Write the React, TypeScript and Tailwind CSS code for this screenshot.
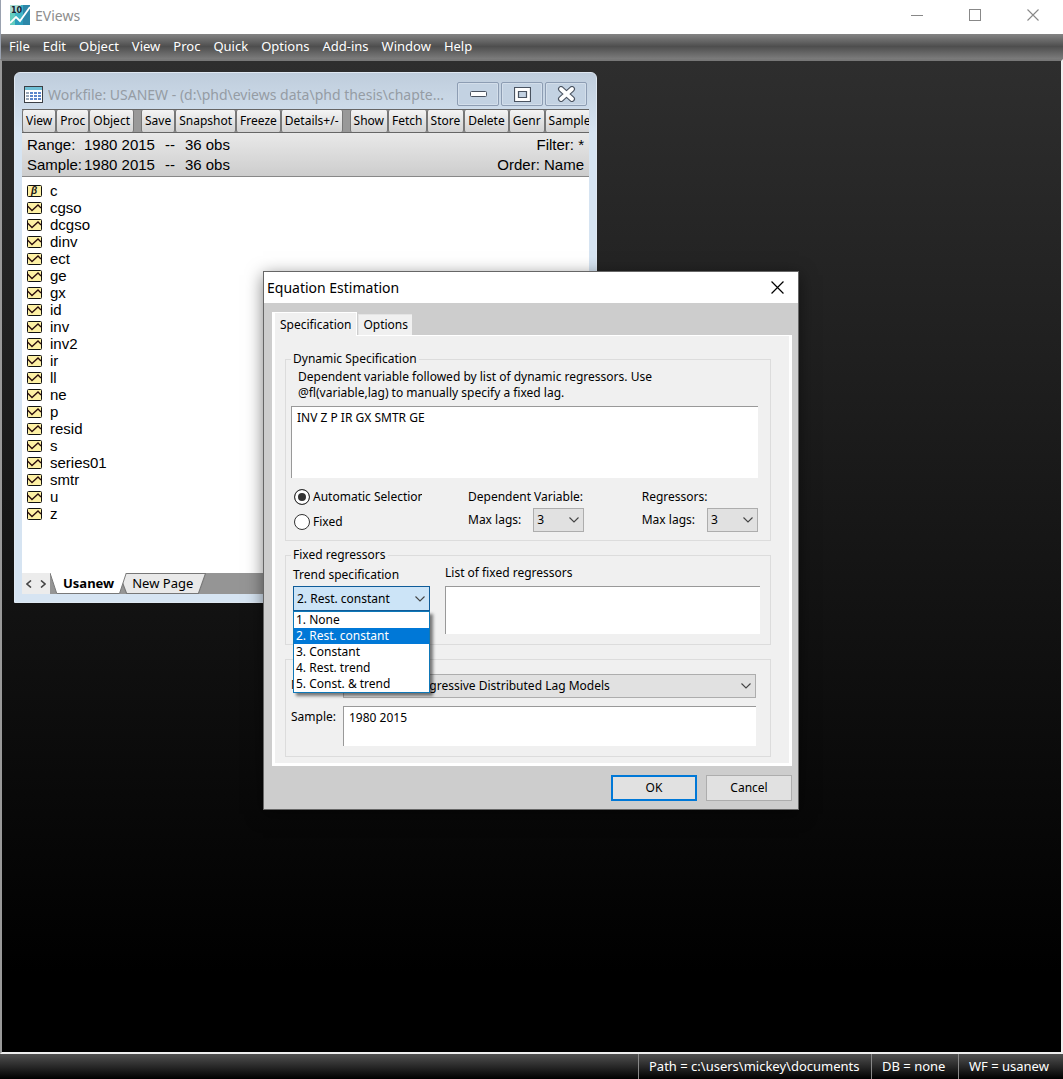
import { useState } from "react";
import type { ReactNode } from "react";
import { clsx } from "clsx";

const menus = ["File", "Edit", "Object", "View", "Proc", "Quick", "Options", "Add-ins", "Window", "Help"];

const toolGroups = [
  ["View", "Proc", "Object"],
  ["Save", "Snapshot", "Freeze", "Details+/-"],
  ["Show", "Fetch", "Store", "Delete", "Genr", "Sample"],
];

const series = [
  "c", "cgso", "dcgso", "dinv", "ect", "ge", "gx", "id", "inv", "inv2",
  "ir", "ll", "ne", "p", "resid", "s", "series01", "smtr", "u", "z",
];

const trends = ["1. None", "2. Rest. constant", "3. Constant", "4. Rest. trend", "5. Const. & trend"];

function AppIcon() {
  return (
    <svg width="20" height="20" viewBox="0 0 20 20" aria-hidden="true">
      <rect width="20" height="20" fill="#3fb3c4" />
      <rect width="11" height="8" fill="#a9dcd3" />
      <path d="M0 8h5v12H0z" fill="#63cdbf" />
      <path d="M13 0h7v20h-7z" fill="#2c87a8" />
      <path d="M5 12l4 4 4-5v9H5z" fill="#2c9dbb" />
      <path d="M0 18l6-6 4 4L20 2" fill="none" stroke="#fff" strokeWidth="1.8" />
      <text x="1" y="8" fontSize="8" fontWeight="bold" fontFamily="DejaVu Sans, sans-serif" fill="#123">10</text>
    </svg>
  );
}

function TableIcon() {
  return (
    <svg width="19" height="17" viewBox="0 0 19 17" aria-hidden="true" shapeRendering="crispEdges">
      <rect x="0" y="0" width="19" height="17" fill="#3b3f45" />
      <rect x="1" y="1" width="17" height="15" fill="#fff" />
      <rect x="1" y="1" width="17" height="3" fill="#6fc0d6" />
      {[6, 9, 12].map((y) =>
        [2, 6, 10, 14].map((x) => <rect key={`${x}-${y}`} x={x} y={y} width="3" height="2" fill={x === 2 ? "#9aa7b8" : "#5b86cc"} />)
      )}
    </svg>
  );
}

function SeriesIcon({ coef }: { coef?: boolean }) {
  return (
    <svg width="15" height="12" viewBox="0 0 15 12" aria-hidden="true">
      <rect x="0.5" y="0.5" width="14" height="11" rx="1" fill="#fdf0a4" stroke="#111" />
      {coef ? (
        <text x="4" y="9" fontSize="10" fontWeight="bold" fontStyle="italic" fontFamily="Liberation Sans, sans-serif" fill="#111">β</text>
      ) : (
        <path d="M0.5 4L5 8.5L11 3L14 6" fill="none" stroke="#2a0c0c" strokeWidth="1.3" />
      )}
    </svg>
  );
}

function Chevron({ className }: { className?: string }) {
  return (
    <svg className={clsx("pointer-events-none", className)} width="10" height="6" viewBox="0 0 10 6" aria-hidden="true">
      <path d="M0.5 0.5L5 5L9.5 0.5" fill="none" stroke="#444" strokeWidth="1.1" />
    </svg>
  );
}

function Cross({ size, color }: { size: number; color: string }) {
  return (
    <svg width={size} height={size} viewBox="0 0 12 12" aria-hidden="true">
      <path d="M0.5 0.5l11 11M11.5 0.5l-11 11" stroke={color} strokeWidth="1.1" />
    </svg>
  );
}

function MenuBar() {
  return (
    <nav className="flex h-[25px] items-center gap-[13px] border-l border-gray-400 bg-linear-to-b/srgb from-[#848484] via-[#4e4e4e] to-[#7c7c7c] pl-2 text-[13px] text-white">
      {menus.map((m) => (
        <button key={m}>{m}</button>
      ))}
    </nav>
  );
}

function WindowButton({ label, children }: { label: string; children: ReactNode }) {
  return (
    <button aria-label={label} className="flex h-6 w-[42px] items-center justify-center rounded-xs border border-[#8d9db3] bg-[#c3d2e2] shadow-[inset_0_0_0_1px_#d3deea]">
      {children}
    </button>
  );
}

function PageTab({ label, active }: { label: string; active?: boolean }) {
  return (
    <button className={clsx("relative h-full px-[13px] text-[13px]", active ? "z-10 font-bold" : "-ml-2")}>
      <svg className="absolute inset-0 h-full w-full" viewBox="0 0 80 21" preserveAspectRatio="none" aria-hidden="true">
        <path
          d={active ? "M0 0L7 20.5H72L79 0" : "M0 0.5H79.5L73 20.5H7Z"}
          fill={active ? "#fff" : "#e9e9e9"}
          stroke="#777"
        />
      </svg>
      <span className="relative">{label}</span>
    </button>
  );
}

function WorkfileSpan() {
  return (
    <dd className="flex gap-[10px]">
      <span>1980 2015</span>
      <span>--</span>
      <span>36 obs</span>
    </dd>
  );
}

function Workfile() {
  return (
    <section className="absolute top-[11px] left-3 w-[583px] rounded-t-md border border-[#dfe8f2] bg-linear-to-b/srgb from-[#bfcddc] to-[#d6e4f2] to-[60px] px-[7px] pb-2">
      <header className="flex h-9 items-center pt-[6px] pl-[2px]">
        <TableIcon />
        <h2 className="ml-[5px] flex-1 truncate text-[14px] text-[#959ca4]">
          Workfile: USANEW - (d:\phd\eviews data\phd thesis\chapte...
        </h2>
        <div className="flex gap-[2px] pr-[2px]">
          <WindowButton label="Minimize">
            <svg width="17" height="6" viewBox="0 0 17 6">
              <rect x="0.5" y="0.5" width="16" height="5" rx="1" fill="#fff" stroke="#4a5360" />
            </svg>
          </WindowButton>
          <WindowButton label="Maximize">
            <svg width="17" height="15" viewBox="0 0 17 15">
              <path d="M0.5 0.5h16v14h-16z M4.5 4.5v6h8v-6z" fill="#fff" fillRule="evenodd" stroke="#4a5360" strokeWidth="1.2" />
            </svg>
          </WindowButton>
          <WindowButton label="Close">
            <svg width="19" height="16" viewBox="0 0 19 16">
              <path d="M4 3l11 10M15 3L4 13" stroke="#4a5360" strokeWidth="6" strokeLinecap="round" />
              <path d="M4 3l11 10M15 3L4 13" stroke="#fff" strokeWidth="3.8" strokeLinecap="round" />
            </svg>
          </WindowButton>
        </div>
      </header>

      <div className="flex h-6 overflow-hidden border-y border-[#666] bg-[#999] text-[12px]">
        {toolGroups.map((group, i) => (
          <div key={i} className={clsx("flex shrink-0", i > 0 && "ml-[7px]")}>
            {group.map((t) => (
              <button key={t} className="rounded-xs border-x border-[#777] bg-linear-to-b/srgb from-[#f4f4f4] to-[#d2d2d2] px-[3px]">
                {t}
              </button>
            ))}
          </div>
        ))}
      </div>

      <div className="flex justify-between border-b border-[#888] bg-linear-to-b/srgb from-[#e9e9e9] to-[#cdcdcd] px-[5px] pt-[2px] pb-px font-['Liberation_Sans',sans-serif] text-[15px] leading-5">
        <dl className="grid grid-cols-[57px_1fr]">
          <dt>Range:</dt>
          <WorkfileSpan />
          <dt>Sample:</dt>
          <WorkfileSpan />
        </dl>
        <div className="text-right">
          <p>Filter: *</p>
          <p>Order: Name</p>
        </div>
      </div>

      <ul className="bg-white px-[5px] pt-[5px] pb-[51px] font-['Liberation_Sans',sans-serif] text-[15px]">
        {series.map((s) => (
          <li key={s} className="flex h-[17px] items-center gap-2 leading-[17px]">
            <SeriesIcon coef={s === "c"} />
            <span>{s}</span>
          </li>
        ))}
      </ul>

      <div className="flex h-[21px] bg-[#959595]">
        <div className="flex w-7 items-center justify-around bg-[#ececec]">
          <button aria-label="Previous page">
            <svg width="6" height="8" viewBox="0 0 6 8"><path d="M5 0.5L1 4l4 3.5" fill="none" stroke="#444" strokeWidth="1.6" /></svg>
          </button>
          <button aria-label="Next page">
            <svg width="6" height="8" viewBox="0 0 6 8"><path d="M1 0.5L5 4L1 7.5" fill="none" stroke="#444" strokeWidth="1.6" /></svg>
          </button>
        </div>
        <PageTab label="Usanew" active />
        <PageTab label="New Page" />
      </div>
    </section>
  );
}

function LagPicker({ id, title }: { id: string; title: string }) {
  return (
    <div className="flex flex-col gap-[3px]">
      <p>{title}</p>
      <div className="flex items-center gap-3">
        <label htmlFor={id}>Max lags:</label>
        <div className="relative">
          <select id={id} defaultValue="3" className="h-6 w-[51px] appearance-none border border-[#adadad] bg-[#e1e1e1] pl-[3px]">
            {["1", "2", "3", "4"].map((n) => (
              <option key={n}>{n}</option>
            ))}
          </select>
          <Chevron className="absolute top-[9px] right-[5px]" />
        </div>
      </div>
    </div>
  );
}

const radioClass =
  "size-4 appearance-none rounded-full border border-[#333] bg-white checked:bg-[#333] checked:shadow-[inset_0_0_0_3px_#fff]";
const groupClass = "min-w-0 border border-[#dcdcdc]";
const boxClass = "block w-full resize-none border-t border-l border-[#999] bg-white px-[5px] py-[3px] leading-4 outline-none";

function EquationDialog() {
  const [trend, setTrend] = useState(trends[1]);

  return (
    <section
      role="dialog"
      aria-label="Equation Estimation"
      className="absolute top-[210px] left-[261px] w-[536px] border border-[#666] bg-[#cdcdcd] text-[12px] leading-4 shadow-[0_4px_16px_rgba(0,0,0,0.5)]"
    >
      <header className="flex h-[31px] items-center justify-between bg-white pr-[14px] pl-[3px]">
        <h2 className="text-[14px]">Equation Estimation</h2>
        <button aria-label="Close">
          <Cross size={13} color="#000" />
        </button>
      </header>

      <div className="pt-[9px] pr-[6px] pb-2 pl-2">
        <div role="tablist" className="flex items-end gap-px">
          <button role="tab" aria-selected="true" className="relative z-10 -mb-px h-6 border-t border-r border-l-3 border-white bg-[#f0f0f0] px-[5px]">
            Specification
          </button>
          <button role="tab" aria-selected="false" className="h-[21px] border-t border-l border-[#e4e4e4] bg-[#f0f0f0] px-1">
            Options
          </button>
        </div>

        <form className="border-t border-r-3 border-b-3 border-l-3 border-white bg-[#f0f0f0] px-[10px] pt-[15px] pb-[6px]" onSubmit={(e) => e.preventDefault()}>
          <div className="mr-2 flex flex-col gap-[6px]">
            <fieldset className={clsx(groupClass, "pr-3 pb-2 pl-[5px]")}>
              <legend className="px-[2px]">Dynamic Specification</legend>
              <label htmlFor="equation" className="ml-[7px] block w-[380px] pt-[2px]">
                Dependent variable followed by list of dynamic regressors. Use @fl(variable,lag) to manually specify a fixed lag.
              </label>
              <textarea id="equation" defaultValue="INV Z P IR GX SMTR GE" className={clsx(boxClass, "mt-[5px] h-[72px]")} />
              <div className="mt-[11px] flex">
                <div className="mr-[46px] flex w-[131px] flex-col gap-[9px] pl-[3px]">
                  <label className="flex items-center gap-[3px] overflow-hidden whitespace-nowrap">
                    <input type="radio" name="lags" defaultChecked className={clsx(radioClass, "shrink-0")} />
                    Automatic Selection
                  </label>
                  <label className="flex items-center gap-[3px]">
                    <input type="radio" name="lags" className={radioClass} />
                    Fixed
                  </label>
                </div>
                <LagPicker id="dep-lags" title="Dependent Variable:" />
                <div className="ml-auto">
                  <LagPicker id="reg-lags" title="Regressors:" />
                </div>
              </div>
            </fieldset>

            <fieldset className={clsx(groupClass, "flex gap-[15px] pr-[10px] pb-[10px] pl-[7px]")}>
              <legend className="-ml-[2px] px-[2px]">Fixed regressors</legend>
              <div className="relative w-[137px] shrink-0 pt-1">
                <label htmlFor="trend">Trend specification</label>
                <select
                  id="trend"
                  value={trend}
                  onChange={(e) => setTrend(e.target.value)}
                  className="mt-[3px] block h-[25px] w-full appearance-none border border-[#0f5c99] bg-[#cce4f7] pl-[3px]"
                >
                  {trends.map((t) => (
                    <option key={t}>{t}</option>
                  ))}
                </select>
                <Chevron className="absolute top-[33px] right-[5px]" />
                <ul role="listbox" aria-label="Trend specification" className="absolute top-12 left-0 z-20 w-full border border-[#0f78b8] bg-white shadow-[3px_3px_3px_rgba(0,0,0,0.5)]">
                  {trends.map((t) => (
                    <li
                      key={t}
                      role="option"
                      aria-selected={t === trend}
                      onClick={() => setTrend(t)}
                      className={clsx("pl-[2px]", t === trend && "bg-[#0078d7] text-white")}
                    >
                      {t}
                    </li>
                  ))}
                </ul>
              </div>
              <div className="flex-1 pt-[2px]">
                <label htmlFor="fixed-list">List of fixed regressors</label>
                <textarea id="fixed-list" className={clsx(boxClass, "mt-[5px] h-12")} />
              </div>
            </fieldset>

            <fieldset className={clsx(groupClass, "mt-2 grid grid-cols-[52px_1fr] gap-y-2 pt-[14px] pr-[14px] pb-[10px] pl-[5px]")}>
              <label htmlFor="method" className="pt-[3px]">Method:</label>
              <div className="relative">
                <select id="method" className="h-6 w-full appearance-none border border-[#adadad] bg-[#e1e1e1] pl-[3px]">
                  <option>ARDL - Auto-regressive Distributed Lag Models</option>
                </select>
                <Chevron className="absolute top-[9px] right-[5px]" />
              </div>
              <label htmlFor="sample" className="pt-[3px]">Sample:</label>
              <textarea id="sample" defaultValue="1980 2015" className={clsx(boxClass, "h-10")} />
            </fieldset>
          </div>
        </form>

        <div className="mt-[9px] flex justify-end gap-[9px]">
          <button className="h-[26px] w-[86px] border-2 border-[#0078d7] bg-[#e1e1e1]">OK</button>
          <button className="h-[26px] w-[86px] border border-[#adadad] bg-[#e1e1e1]">Cancel</button>
        </div>
      </div>
    </section>
  );
}

export default function App() {
  return (
    <div className="flex min-h-screen flex-col bg-white font-['Noto_Sans',sans-serif] text-black">
      <header className="flex h-[34px] items-center border-l border-gray-400 pr-6 pb-1 pl-[9px]">
        <AppIcon />
        <h1 className="ml-[5px] flex-1 text-[14px] text-[#8d8d8d]">EViews</h1>
        <div className="flex items-center gap-[46px]">
          <button aria-label="Minimize" className="h-px w-3 bg-[#888]" />
          <button aria-label="Maximize" className="size-3 border border-[#888]" />
          <button aria-label="Close">
            <Cross size={12} color="#888" />
          </button>
        </div>
      </header>
      <MenuBar />

      <main className="relative flex-1 border-t-2 border-r-2 border-b-2 border-l-2 border-t-[#777] border-r-[#eee] border-b-[#eee] border-l-[#999] bg-linear-to-b/srgb from-[#2e2e2e] to-black to-[92%]">
        <Workfile />
        <EquationDialog />
      </main>

      <footer className="flex h-[25px] items-stretch justify-end bg-linear-to-b/srgb from-[#505050] to-black text-[13px] leading-6 text-white">
        <span className="min-w-[233px] border-l border-[#888] px-[10px]">Path = c:\users\mickey\documents</span>
        <span className="min-w-[87px] border-l border-[#888] px-[10px]">DB = none</span>
        <span className="min-w-[105px] border-l border-[#888] px-[10px]">WF = usanew</span>
      </footer>
    </div>
  );
}
